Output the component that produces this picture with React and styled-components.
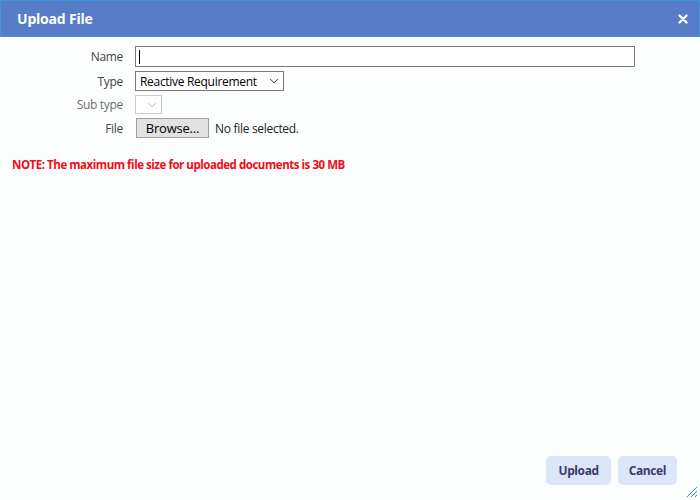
import React from "react";
import styled, { createGlobalStyle } from "styled-components";

const Global = createGlobalStyle`
  html, body { margin: 0; padding: 0; background: #fcfefe; }
  body { font-family: "Open Sans", "Noto Sans", sans-serif; }
  * { box-sizing: border-box; }
`;

const Dialog = styled.div`
  width: 700px;
  height: 500px;
  display: flex;
  flex-direction: column;
  background: #fcfefe;
  position: relative;
`;

const Header = styled.div`
  height: 37px;
  background: #577dc8;
  border: 1px solid #3a9ad8;
  display: flex;
  align-items: center;
  justify-content: space-between;
  padding: 0 9px 0 16px;
  color: #fff;
`;

const Title = styled.div`
  font-size: 14px;
  font-weight: 700;
  letter-spacing: -0.2px;
  margin-top: -1px;
`;

const Close = styled.button`
  border: 0;
  background: none;
  color: #fff;
  padding: 0;
  width: 14px;
  height: 14px;
  display: flex;
  align-items: center;
  justify-content: center;
  cursor: pointer;
`;

const Body = styled.div`
  flex: 1;
  display: flex;
  flex-direction: column;
  padding: 9px 12px 0 12px;
`;

const Form = styled.div`
  display: grid;
  grid-template-columns: 111px 1fr;
  column-gap: 12px;
  row-gap: 4px;
  align-items: center;
  width: 623px;
`;

const Label = styled.div`
  text-align: right;
  font-size: 12px;
  color: ${(p) => (p.$disabled ? "#6d6d6d" : "#444")};
  letter-spacing: -0.3px;
`;

const TextInput = styled.div`
  height: 21px;
  border: 1px solid #7a7a7a;
  background: #fff;
  display: flex;
  align-items: center;
  padding-left: 3px;
`;

const Caret = styled.span`
  width: 1px;
  height: 14px;
  background: #000;
`;

const Select = styled.div`
  width: ${(p) => p.$w}px;
  height: ${(p) => p.$h}px;
  border: 1px solid ${(p) => (p.$disabled ? "#cccccc" : "#7a7a7a")};
  background: #fff;
  display: flex;
  align-items: center;
  justify-content: space-between;
  padding: 0 4px 0 4px;
  font-size: 12px;
  color: #000;
  letter-spacing: -0.3px;
`;

const Chevron = ({ color }) => (
  <svg width="10" height="6" viewBox="0 0 10 6" style={{ marginLeft: "auto" }}>
    <path d="M1 0.8 L5 4.8 L9 0.8" fill="none" stroke={color} strokeWidth="1" />
  </svg>
);

const FileRow = styled.div`
  display: flex;
  align-items: center;
  gap: 6px;
  font-size: 12px;
  letter-spacing: -0.3px;
  color: #222;
`;

const Browse = styled.div`
  margin-left: 1px;
  width: 73px;
  height: 20px;
  border: 1px solid #a0a0a0;
  background: #e2e2e2;
  display: flex;
  align-items: center;
  justify-content: center;
  font-size: 13px;
  color: #000;
  letter-spacing: -0.2px;
`;

const Note = styled.div`
  margin-top: 19px;
  font-size: 11.5px;
  font-weight: 700;
  color: #f20b17;
  letter-spacing: -0.46px;
`;

const Spacer = styled.div`
  flex: 1;
`;

const Footer = styled.div`
  display: flex;
  justify-content: flex-end;
  gap: 7px;
  padding: 0 23px 15px 0;
`;

const Button = styled.button`
  height: 29px;
  padding: 0 ${(p) => p.$px}px;
  border: 0;
  border-radius: 5px;
  background: #dce6f8;
  color: #3a3a6c;
  font-family: inherit;
  font-size: 12px;
  font-weight: 700;
  letter-spacing: -0.4px;
  cursor: pointer;
`;

const Grip = styled.svg`
  position: absolute;
  right: 2px;
  bottom: 2px;
`;

export default function App() {
  return (
    <>
      <Global />
      <Dialog>
        <Header>
          <Title>Upload File</Title>
          <Close aria-label="close">
            <svg width="10" height="10" viewBox="0 0 10 10">
              <path d="M1.5 1.5 L8.5 8.5 M8.5 1.5 L1.5 8.5" stroke="#fff" strokeWidth="2.4" strokeLinecap="round" />
            </svg>
          </Close>
        </Header>
        <Body>
          <Form>
            <Label>Name</Label>
            <TextInput>
              <Caret />
            </TextInput>
            <Label>Type</Label>
            <Select $w={149} $h={20}>
              Reactive Requirement
              <Chevron color="#333" />
            </Select>
            <Label $disabled>Sub type</Label>
            <Select $w={27} $h={19} $disabled>
              <Chevron color="#bbb" />
            </Select>
            <Label>File</Label>
            <FileRow>
              <Browse>Browse...</Browse>
              No file selected.
            </FileRow>
          </Form>
          <Note>NOTE: The maximum file size for uploaded documents is 30 MB</Note>
          <Spacer />
        </Body>
        <Footer>
          <Button $px={12}>Upload</Button>
          <Button $px={11}>Cancel</Button>
        </Footer>
        <Grip width="12" height="12" viewBox="0 0 12 12">
          <path d="M1 11 L11 1 M5 11 L11 5 M9 11 L11 9" stroke="#3a8de0" strokeWidth="1" />
        </Grip>
      </Dialog>
    </>
  );
}
